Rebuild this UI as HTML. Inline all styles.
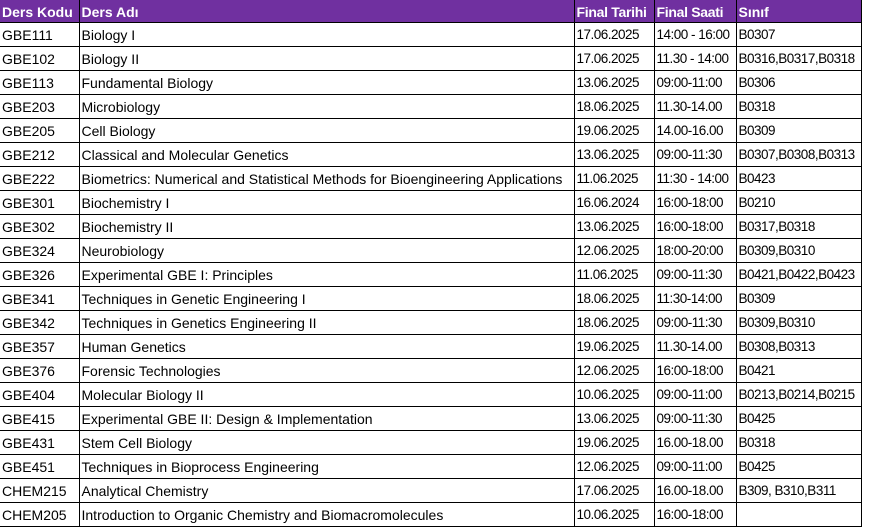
<!DOCTYPE html>
<html><head><meta charset="utf-8"><style>
body{margin:0;background:#fff;width:869px;height:528px;overflow:hidden;font-family:"Liberation Sans",sans-serif;}
table{border-collapse:collapse;table-layout:fixed;position:absolute;left:0;top:0;width:861px;}
td{height:23px;border:1px solid #000;padding:0 0 0 2px;font-size:14px;color:#000;white-space:nowrap;overflow:hidden;vertical-align:middle;line-height:16px;}
td:nth-child(n+3){font-size:13.5px;letter-spacing:-0.5px;}
tr.h td{height:21px;background:#7030A0;color:#fff;font-weight:bold;font-size:14px;letter-spacing:0;border-color:#7030A0;border-right:1px solid #000;border-bottom:1px solid #000;}
tr.h td:nth-child(3),tr.h td:nth-child(4){letter-spacing:-0.3px;}
td:first-child{border-left:none;}
</style></head><body>
<table>
<colgroup><col style="width:79px"><col style="width:495px"><col style="width:80px"><col style="width:82px"><col style="width:125px"></colgroup>
<tr class="h"><td>Ders Kodu</td><td>Ders Adı</td><td>Final Tarihi</td><td>Final Saati</td><td>Sınıf</td></tr>
<tr><td>GBE111</td><td>Biology I</td><td>17.06.2025</td><td>14:00 - 16:00</td><td>B0307</td></tr>
<tr><td>GBE102</td><td>Biology II</td><td>17.06.2025</td><td>11.30 - 14:00</td><td>B0316,B0317,B0318</td></tr>
<tr><td>GBE113</td><td>Fundamental Biology</td><td>13.06.2025</td><td>09:00-11:00</td><td>B0306</td></tr>
<tr><td>GBE203</td><td>Microbiology</td><td>18.06.2025</td><td>11.30-14.00</td><td>B0318</td></tr>
<tr><td>GBE205</td><td>Cell Biology</td><td>19.06.2025</td><td>14.00-16.00</td><td>B0309</td></tr>
<tr><td>GBE212</td><td>Classical and Molecular Genetics</td><td>13.06.2025</td><td>09:00-11:30</td><td>B0307,B0308,B0313</td></tr>
<tr><td>GBE222</td><td>Biometrics: Numerical and Statistical Methods for Bioengineering Applications</td><td>11.06.2025</td><td>11:30 - 14:00</td><td>B0423</td></tr>
<tr><td>GBE301</td><td>Biochemistry I</td><td>16.06.2024</td><td>16:00-18:00</td><td>B0210</td></tr>
<tr><td>GBE302</td><td>Biochemistry II</td><td>13.06.2025</td><td>16:00-18:00</td><td>B0317,B0318</td></tr>
<tr><td>GBE324</td><td>Neurobiology</td><td>12.06.2025</td><td>18:00-20:00</td><td>B0309,B0310</td></tr>
<tr><td>GBE326</td><td>Experimental GBE I: Principles</td><td>11.06.2025</td><td>09:00-11:30</td><td>B0421,B0422,B0423</td></tr>
<tr><td>GBE341</td><td>Techniques in Genetic Engineering I</td><td>18.06.2025</td><td>11:30-14:00</td><td>B0309</td></tr>
<tr><td>GBE342</td><td>Techniques in Genetics Engineering II</td><td>18.06.2025</td><td>09:00-11:30</td><td>B0309,B0310</td></tr>
<tr><td>GBE357</td><td>Human Genetics</td><td>19.06.2025</td><td>11.30-14.00</td><td>B0308,B0313</td></tr>
<tr><td>GBE376</td><td>Forensic Technologies</td><td>12.06.2025</td><td>16:00-18:00</td><td>B0421</td></tr>
<tr><td>GBE404</td><td>Molecular Biology II</td><td>10.06.2025</td><td>09:00-11:00</td><td>B0213,B0214,B0215</td></tr>
<tr><td>GBE415</td><td>Experimental GBE II: Design &amp; Implementation</td><td>13.06.2025</td><td>09:00-11:30</td><td>B0425</td></tr>
<tr><td>GBE431</td><td>Stem Cell Biology</td><td>19.06.2025</td><td>16.00-18.00</td><td>B0318</td></tr>
<tr><td>GBE451</td><td>Techniques in Bioprocess Engineering</td><td>12.06.2025</td><td>09:00-11:00</td><td>B0425</td></tr>
<tr><td>CHEM215</td><td>Analytical Chemistry</td><td>17.06.2025</td><td>16.00-18.00</td><td>B309, B310,B311</td></tr>
<tr><td>CHEM205</td><td>Introduction to Organic Chemistry and Biomacromolecules</td><td>10.06.2025</td><td>16:00-18:00</td><td></td></tr>
</table>
</body></html>
